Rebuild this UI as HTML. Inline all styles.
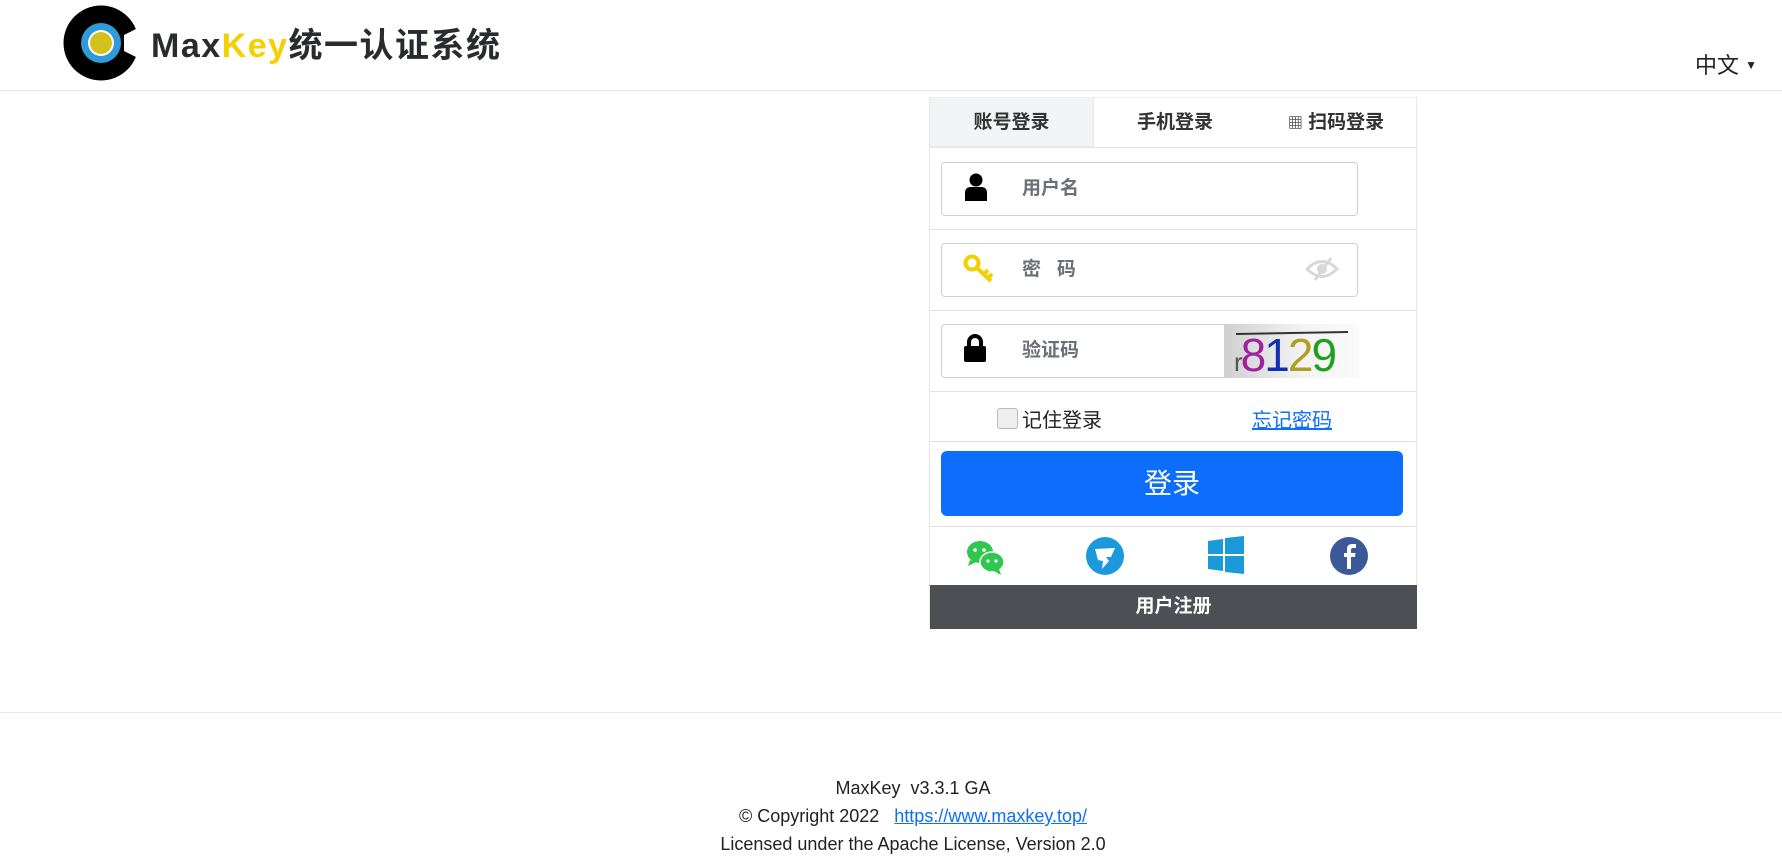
<!DOCTYPE html>
<html><head><meta charset="utf-8"><style>
*{box-sizing:border-box;margin:0;padding:0}
body{width:1782px;height:865px;background:#fff;font-family:"Liberation Sans","Noto Sans CJK SC",sans-serif;position:relative;overflow:hidden;color:#212529}
.abs{position:absolute}
.hl{left:0;width:1782px;height:1px;background:#e6e6e6}
.logo-t{left:151px;top:24px;font-size:34px;font-weight:bold;letter-spacing:1.5px;color:#2a2b2e;line-height:44px}
.panel{left:929px;top:97px;width:488px;height:531px;border:1px solid #e5e5e5;border-top:1px solid #eee}
.tab{top:0;height:50px;line-height:50px;text-align:center;font-size:19px;font-weight:bold;color:#333}
.sep{left:0;width:486px;height:1px;background:#e3e3e6}
.inp{left:11px;width:417px;height:54px;border:1px solid #ccd0d6;border-radius:4px;background:#fff}
.lbl{left:80px;top:13px;font-size:19px;font-weight:bold;color:#6b7077;line-height:26px}
</style></head><body>
<svg class="abs" style="left:60px;top:4px" width="82" height="80" viewBox="60 4 82 80">
<circle cx="101" cy="43" r="37.5" fill="#000"/>
<polygon points="142,26 124,35 124,51 142,60" fill="#fff"/>
<circle cx="101" cy="43" r="22" fill="#000"/>
<circle cx="101" cy="43" r="20" fill="#2e9ad8"/>
<circle cx="101" cy="43" r="13" fill="#fff"/>
<circle cx="101" cy="43" r="11" fill="#d4c21c"/>
</svg>
<div class="abs logo-t">Max<span style="color:#f5d000">Key</span>统一认证系统</div>
<div class="abs" style="left:1695px;top:48px;font-size:22px;color:#222">中文 <span style="font-size:12px;vertical-align:4px">▼</span></div>
<div class="abs hl" style="top:90px"></div>

<div class="abs panel">
<div class="abs tab" style="left:0;width:163px;background:#f2f4f5;border-bottom:2px solid #e6e8ea">账号登录</div>
<div class="abs tab" style="left:163px;width:163px;border-left:1px solid #e5e5e5;border-bottom:1px solid #e5e5e5">手机登录</div>
<div class="abs tab" style="left:326px;width:160px;border-bottom:1px solid #e5e5e5"><span style="font-size:15px">▦</span> 扫码登录</div>

<div class="abs inp" style="top:64px">
<svg class="abs" style="left:22px;top:10px" width="24" height="28" viewBox="0 0 24 28"><circle cx="12" cy="7" r="6.5" fill="#000"/><path d="M1 28 V20 Q1 14 7 14 H17 Q23 14 23 20 V28 Z" fill="#000"/></svg>
<div class="abs lbl">用户名</div></div>
<div class="abs sep" style="top:131px"></div>
<div class="abs inp" style="top:145px">
<svg class="abs" style="left:21px;top:10px" width="32" height="30" viewBox="0 0 32 30"><circle cx="9" cy="9" r="6.5" fill="none" stroke="#f5d000" stroke-width="4"/><path d="M13 13 L28 27 M21 20 L25 16 M25 24 L29 20" stroke="#f5d000" stroke-width="4" fill="none"/></svg>
<div class="abs lbl">密 &nbsp; 码</div>
<svg class="abs" style="left:363px;top:12px" width="34" height="26" viewBox="0 0 34 26"><path d="M2 13 Q17 -2 32 13 Q17 28 2 13 Z" fill="none" stroke="#d8d8d8" stroke-width="3"/><circle cx="17" cy="13" r="5" fill="#d8d8d8"/><path d="M10 24 L26 2" stroke="#d8d8d8" stroke-width="3"/></svg></div>
<div class="abs sep" style="top:212px"></div>
<div class="abs inp" style="top:226px;border-radius:4px 0 0 4px">
<svg class="abs" style="left:22px;top:9px" width="22" height="28" viewBox="0 0 22 28"><path d="M5 13 V8 A6 6 0 0 1 17 8 V13" fill="none" stroke="#000" stroke-width="4"/><rect x="0" y="12" width="22" height="16" rx="2" fill="#000"/></svg>
<div class="abs lbl">验证码</div>
<div class="abs" style="left:282px;top:-1px;width:135px;height:54px;background:linear-gradient(90deg,#d0d0d0,#f4f4f4 60%,#fafafa);overflow:hidden">
<div class="abs" style="left:12px;top:8px;width:112px;height:2px;background:#333;transform:rotate(-1deg)"></div>
<div class="abs" style="left:10px;top:6px;font-size:46px;line-height:50px;font-family:'Liberation Sans',sans-serif;letter-spacing:-2px"><span style="color:#555;font-size:26px">r</span><span style="color:#a020a0">8</span><span style="color:#1030b0">1</span><span style="color:#b0a020">2</span><span style="color:#20a020">9</span></div></div></div>
<div class="abs sep" style="top:293px"></div>
<div class="abs" style="left:67px;top:310px;width:21px;height:21px;border:1px solid #bbb;border-radius:3px;background:#eee"></div>
<div class="abs" style="left:92px;top:306px;font-size:20px;color:#222">记住登录</div>
<div class="abs" style="left:322px;top:306px;font-size:20px;color:#0d6efd;text-decoration:underline">忘记密码</div>
<div class="abs sep" style="top:343px"></div>
<div class="abs" style="left:11px;top:353px;width:462px;height:65px;background:#0d6efd;border-radius:6px;color:#fff;font-size:28px;text-align:center;line-height:65px">登录</div>
<div class="abs sep" style="top:428px"></div>
<svg class="abs" style="left:35px;top:440px" width="40" height="38" viewBox="0 0 40 38"><ellipse cx="15" cy="14" rx="13" ry="11" fill="#2dc84d"/><path d="M5 22 L3 28 L11 24 Z" fill="#2dc84d"/><ellipse cx="27" cy="24" rx="12" ry="10" fill="#2dc84d" stroke="#fff" stroke-width="1.5"/><path d="M34 31 L36 37 L29 33 Z" fill="#2dc84d"/><circle cx="10" cy="12" r="1.8" fill="#fff"/><circle cx="19" cy="12" r="1.8" fill="#fff"/><circle cx="23" cy="23" r="1.6" fill="#fff"/><circle cx="31" cy="23" r="1.6" fill="#fff"/></svg>
<svg class="abs" style="left:156px;top:438px" width="38" height="40" viewBox="0 0 38 40"><circle cx="19" cy="20" r="19" fill="#1b99dc"/><path d="M9 13 L29 12 L25 21 L20 21 L23 25 L16 33 L17 25 L12 24 Z" fill="#fff"/></svg>
<svg class="abs" style="left:278px;top:438px" width="36" height="38" viewBox="0 0 36 38"><path d="M0 5 L15 3 V18 H0 Z M17 2 L36 0 V18 H17 Z M0 20 H15 V35 L0 33 Z M17 20 H36 V38 L17 36 Z" fill="#1a9ad9"/></svg>
<svg class="abs" style="left:400px;top:438px" width="38" height="40" viewBox="0 0 38 40"><circle cx="19" cy="20" r="19" fill="#3b5998"/><path d="M21 33 V21 H25 L25.5 17 H21 V14 Q21 12 23 12 H26 V8 H22 Q17 8 17 13 V17 H14 V21 H17 V33 Z" fill="#fff"/></svg>
<div class="abs" style="left:0;top:487px;width:487px;height:44px;background:#4e4f54;color:#fff;font-size:19px;font-weight:bold;text-align:center;line-height:44px">用户注册</div>
</div>

<div class="abs hl" style="top:712px;background:#e8e8e8"></div>
<div class="abs" style="left:0;width:1826px;top:774px;text-align:center;font-size:18px;line-height:28px;color:#222">
MaxKey&nbsp; v3.3.1 GA<br>© Copyright 2022 &nbsp; <span style="color:#0d6efd;text-decoration:underline">https://www.maxkey.top/</span><br>Licensed under the Apache License, Version 2.0</div>
</body></html>
